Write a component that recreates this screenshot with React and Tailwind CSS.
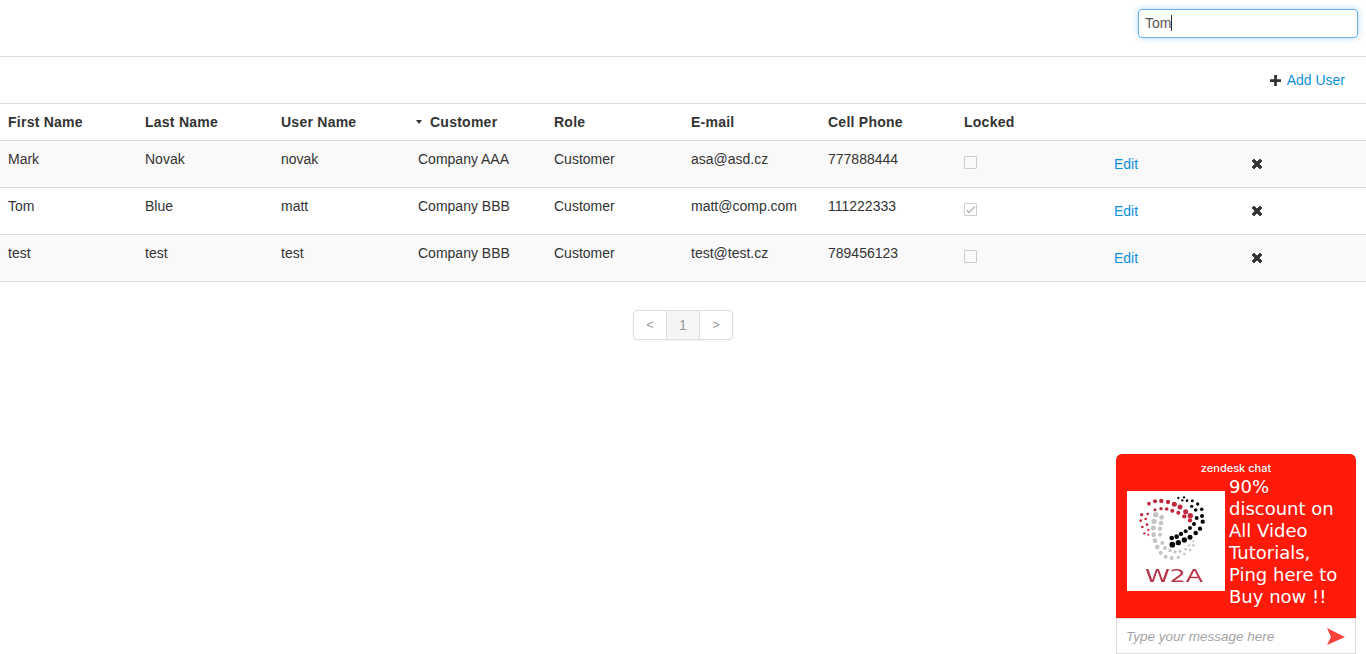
import React from 'react';

const users = [
    { first: 'Mark', last: 'Novak', user: 'novak', customer: 'Company AAA', role: 'Customer', email: 'asa@asd.cz', phone: '777888444', locked: false },
    { first: 'Tom', last: 'Blue', user: 'matt', customer: 'Company BBB', role: 'Customer', email: 'matt@comp.com', phone: '111222333', locked: true },
    { first: 'test', last: 'test', user: 'test', customer: 'Company BBB', role: 'Customer', email: 'test@test.cz', phone: '789456123', locked: false },
];

const headers = ['First Name', 'Last Name', 'User Name', 'Customer', 'Role', 'E-mail', 'Cell Phone', 'Locked', '', ''];

// whole pixel columns, so the text starts where it does in the reference
const columns = ['w-[137px]', 'w-[136px]', 'w-[137px]', 'w-[136px]', 'w-[137px]', 'w-[137px]', 'w-[136px]', 'w-[137px]', 'w-[136px]', 'w-[137px]'];

// x, y, r in the coordinates of the logo viewBox
const redDots = [
    [50, 80, 5], [72, 47, 5.5], [90, 40, 6], [109, 39, 6.5], [129, 42, 6.5], [148, 49, 7.5], [165, 57, 7.5], [182, 71, 7.5], [196, 83, 8],
    [68, 78, 4], [90, 65, 4.5], [108, 62, 5], [125, 63, 5.5], [142, 68, 6], [160, 74, 6], [178, 85, 6.5], [195, 97, 6.5],
    [47, 98, 4], [62, 93, 4], [52, 117, 4], [66, 110, 4], [58, 136, 3.5], [70, 126, 3.5], [70, 140, 3],
];
const grayDots = [
    [92, 80, 8], [110, 88, 7], [87, 100, 8], [108, 105, 7], [85, 120, 7.5], [105, 122, 6.5], [86, 140, 7], [105, 140, 6],
    [90, 158, 7], [112, 165, 6], [97, 177, 7], [120, 180, 6], [107, 194, 6], [135, 188, 5], [150, 192, 5], [165, 190, 4.5],
    [122, 206, 6], [140, 210, 6], [160, 208, 5], [178, 198, 4], [182, 184, 4], [195, 186, 4], [205, 172, 4], [192, 172, 3.5], [205, 160, 3],
];
const blackDots = [
    [142, 170, 8.5], [160, 164, 8], [178, 156, 8], [195, 148, 7.5], [212, 135, 7], [225, 122, 6.5], [233, 101, 6.5],
    [140, 150, 7], [155, 146, 7], [168, 138, 6.5], [182, 130, 6], [195, 120, 6], [207, 108, 6], [215, 90, 6], [231, 84, 6],
    [230, 64, 5.5], [218, 48, 5], [202, 38, 4.5], [186, 38, 4], [172, 37, 3.5], [160, 30, 3.5], [177, 28, 3.5], [212, 66, 5.5], [200, 55, 5],
];

function Logo() {
    return (
        <div className="relative w-[98px] h-[100px] bg-white shrink-0">
            <svg viewBox="6 9 294 240" className="w-[98px] h-[80px] block">
                {redDots.map(([x, y, r], i) => <circle key={i} cx={x} cy={y} r={r} fill="#c0283c" />)}
                {grayDots.map(([x, y, r], i) => <circle key={i} cx={x} cy={y} r={r} fill="#c4c4c4" />)}
                {blackDots.map(([x, y, r], i) => <circle key={i} cx={x} cy={y} r={r} fill="#0a0a0a" />)}
            </svg>
            <div className="absolute left-[-2px] right-[2px] top-[75px] text-center text-[18px] leading-[20px] text-[#b9354a] font-['DejaVu_Sans',sans-serif] scale-x-[1.4]">W2A</div>
        </div>
    );
}

function Checkbox({ checked }) {
    return (
        <span className="block w-[13px] h-[13px] mt-[7px] border border-[#ccc] bg-transparent rounded-[1px]">
            {checked && (
                <svg viewBox="0 0 11 11" className="w-[11px] h-[11px] block">
                    <path d="M1.5 6 L4 8.5 L10 2.5" fill="none" stroke="#b5b5b5" strokeWidth="1.4" />
                </svg>
            )}
        </span>
    );
}

function RemoveIcon() {
    return (
        <svg viewBox="0 0 12 12" className="w-[12px] h-[12px] block mt-[9px] ml-[14px]">
            <path d="M3 1 L6 4 L9 1 L11 3 L8 6 L11 9 L9 11 L6 8 L3 11 L1 9 L4 6 L1 3 Z" fill="#333" stroke="#333" strokeWidth="0.8" strokeLinejoin="round" />
        </svg>
    );
}

export default function App() {
    return (
        <div className="relative min-h-[654px] bg-white text-[14px] leading-[20px] text-[#333] font-['Liberation_Sans',Arial,sans-serif]">
            {/* Search */}
            <div className="h-[57px] border-b border-[#ddd] flex justify-end pt-[9px] pr-[8px]">
                <div className="w-[220px] h-[29px] border border-[#66afe9] rounded-[4px] px-[6px] pb-[1px] flex items-center text-[#555] shadow-[0_0_6px_rgba(102,175,233,0.5)]">
                    Tom<span className="w-px h-[16px] bg-[#333]" />
                </div>
            </div>

            {/* Toolbar */}
            <div className="h-[46px] flex justify-end items-center pr-[21px]">
                <svg viewBox="0 0 12 12" className="w-[11px] h-[11px] mr-[6px] mt-[1px]">
                    <path d="M4.5 0 H7.5 V4.5 H12 V7.5 H7.5 V12 H4.5 V7.5 H0 V4.5 H4.5 Z" fill="#333" />
                </svg>
                <a className="text-[#0e8fd8]">Add User</a>
            </div>

            {/* Users table */}
            <table className="w-full table-fixed border-collapse">
                <colgroup>
                    {columns.map((c, i) => <col key={i} className={c} />)}
                </colgroup>
                <thead>
                    <tr className="h-[37px] border-y border-[#ddd]">
                        {headers.map((h, i) => (
                            <th key={i} className="px-2 text-left font-bold align-middle tracking-[0.25px]">
                                {h === 'Customer' ? (
                                    <span className="flex items-center -ml-[2px]">
                                        <span className="w-0 h-0 border-x-[3px] border-x-transparent border-t-[4px] border-t-[#333] mr-[8px]" />
                                        {h}
                                    </span>
                                ) : h}
                            </th>
                        ))}
                    </tr>
                </thead>
                <tbody>
                    {users.map((u, i) => (
                        <tr key={i} className={`h-[47px] border-b border-[#ddd] ${i % 2 === 0 ? 'bg-[#f9f9f9]' : 'bg-white'}`}>
                            <td className="px-2 pt-2 align-top">{u.first}</td>
                            <td className="px-2 pt-2 align-top">{u.last}</td>
                            <td className="px-2 pt-2 align-top">{u.user}</td>
                            <td className="px-2 pt-2 align-top">{u.customer}</td>
                            <td className="px-2 pt-2 align-top">{u.role}</td>
                            <td className="px-2 pt-2 align-top">{u.email}</td>
                            <td className="px-2 pt-2 align-top">{u.phone}</td>
                            <td className="px-2 pt-2 align-top"><Checkbox checked={u.locked} /></td>
                            <td className="px-2 pt-2 align-top"><a className="block ml-[13px] mt-[5px] text-[#0e8fd8]">Edit</a></td>
                            <td className="px-2 pt-2 align-top"><RemoveIcon /></td>
                        </tr>
                    ))}
                </tbody>
            </table>

            {/* Pagination */}
            <div className="flex justify-center mt-[28px]">
                <div className="flex h-[30px] border border-[#ddd] rounded-[4px] text-[#999] shadow-[0_1px_2px_rgba(0,0,0,0.06)]">
                    <span className="w-[32px] flex items-center justify-center text-[13px]">&lt;</span>
                    <span className="w-[34px] flex items-center justify-center bg-[#f5f5f5] border-x border-[#ddd]">1</span>
                    <span className="w-[32px] flex items-center justify-center text-[13px]">&gt;</span>
                </div>
            </div>

            {/* Chat widget */}
            <div className="fixed right-[10px] bottom-0 w-[240px] h-[200px] flex flex-col rounded-t-[6px] overflow-hidden">
                <div className="flex-1 bg-[#ff1a0a] text-white">
                    <div className="h-[25px] pt-[8px] text-center text-[11px] leading-[12px] font-['Inter',sans-serif] font-medium">zendesk chat</div>
                    <div className="flex pl-[11px] gap-[4px]">
                        <div className="pt-[12px]"><Logo /></div>
                        <p className="w-[115px] text-[18px] leading-[22px] font-['DejaVu_Sans',Verdana,sans-serif] -mt-[3px]">
                            90% discount on All Video Tutorials, Ping here to Buy now !!
                        </p>
                    </div>
                </div>
                <div className="h-[36px] bg-white border border-t-[#ddd] border-x-[#ddd] border-b-[#ddd] flex items-center justify-between pl-[9px] pr-[10px]">
                    <span className="text-[13.5px] italic text-[#a3a3a3] pt-[2px]">Type your message here</span>
                    <svg viewBox="0 0 18 17" className="w-[18px] h-[17px]">
                        <path d="M0 0 L18 9 L0 17 L4 9 Z" fill="#f8413a" />
                    </svg>
                </div>
            </div>
        </div>
    );
}
